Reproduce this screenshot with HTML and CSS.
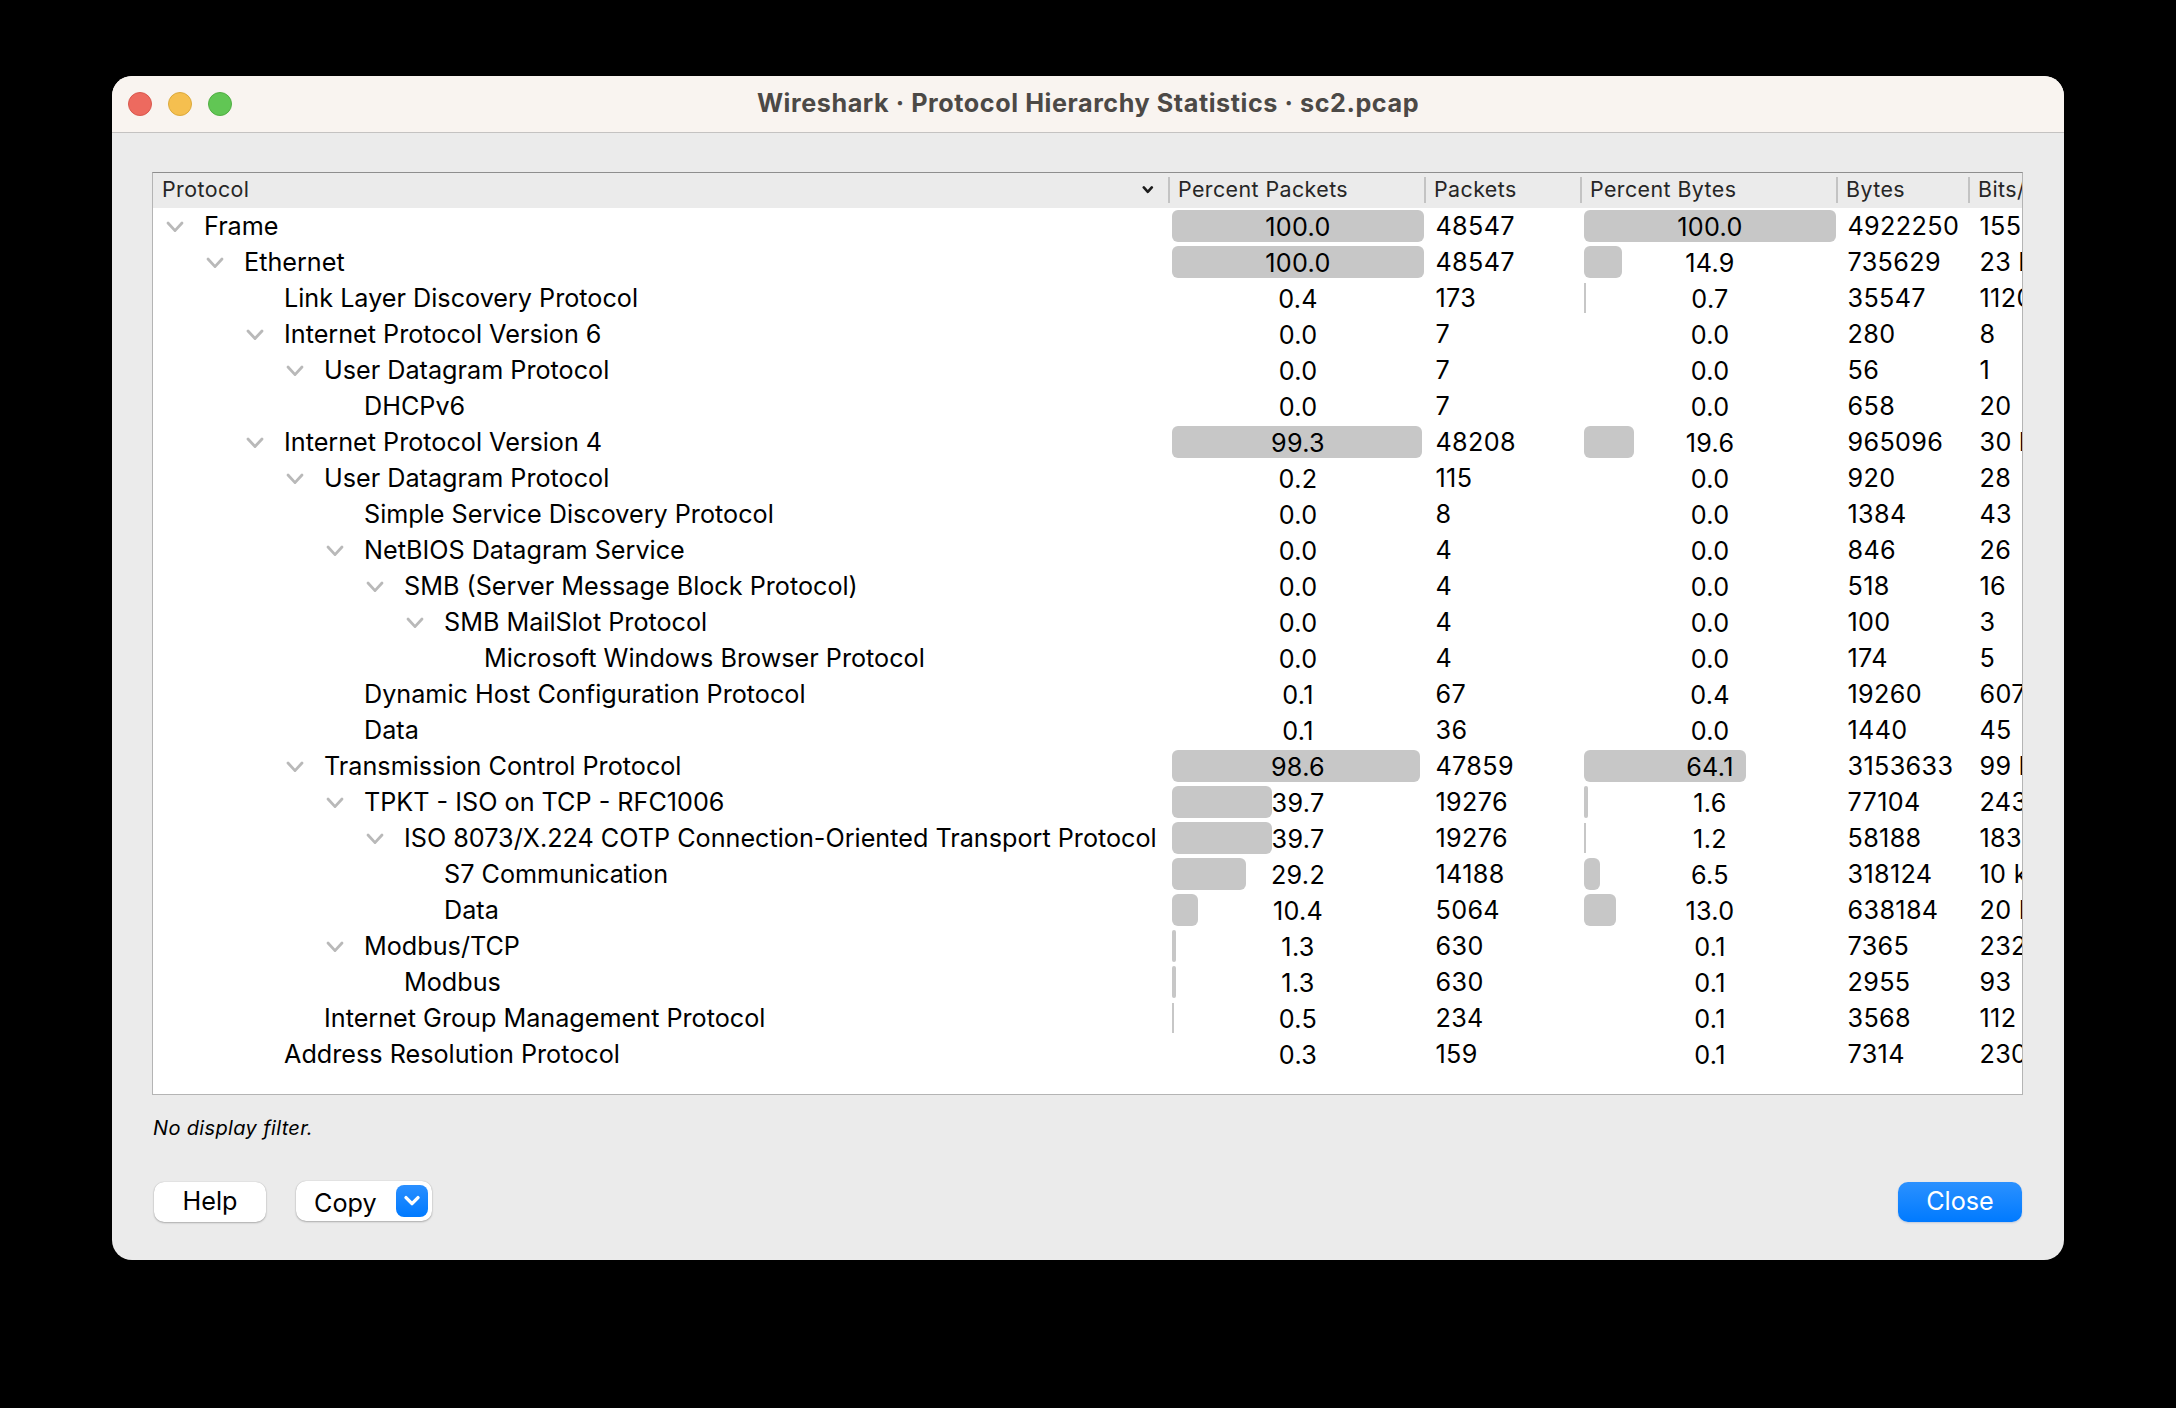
FILE: index.html
```html
<!DOCTYPE html>
<html lang="en">
<head>
<meta charset="utf-8">
<title>Wireshark · Protocol Hierarchy Statistics · sc2.pcap</title>
<link rel="stylesheet" href="styles.css">
</head>
<body>
<svg class="defs" aria-hidden="true"><symbol id="chev" viewBox="0 0 18 12"><path d="M2 2 L9 9.6 L16 2"/></symbol></svg>
<main class="window">
<header class="titlebar">
<div class="lights"><i class="light red"></i><i class="light yellow"></i><i class="light green"></i></div>
<h1 class="title">Wireshark · Protocol Hierarchy Statistics · sc2.pcap</h1>
</header>
<section class="content">
<div class="tree">
<div class="row head"><div class="th"><span>Protocol</span><svg class="sort" viewBox="0 0 12 10"><path d="M1.8 2.4 L5.8 6.8 L9.8 2.4"/></svg></div><div class="th"><span>Percent Packets</span></div><div class="th"><span>Packets</span></div><div class="th"><span>Percent Bytes</span></div><div class="th"><span>Bytes</span></div><div class="th"><span>Bits/s</span></div></div>
<div class="row"><div class="name l0"><svg class="chev"><use href="#chev"/></svg><span>Frame</span></div><div class="pct"><i class="bar" style="width:252px"></i><span>100.0</span></div><div class="num">48547</div><div class="pct"><i class="bar" style="width:252px"></i><span>100.0</span></div><div class="num">4922250</div><div class="num">155 k</div></div>
<div class="row"><div class="name l1"><svg class="chev"><use href="#chev"/></svg><span>Ethernet</span></div><div class="pct"><i class="bar" style="width:252px"></i><span>100.0</span></div><div class="num">48547</div><div class="pct"><i class="bar" style="width:38px"></i><span>14.9</span></div><div class="num">735629</div><div class="num">23 k</div></div>
<div class="row"><div class="name l2"><span>Link Layer Discovery Protocol</span></div><div class="pct"><span>0.4</span></div><div class="num">173</div><div class="pct"><i class="bar thin"></i><span>0.7</span></div><div class="num">35547</div><div class="num">1120</div></div>
<div class="row"><div class="name l2"><svg class="chev"><use href="#chev"/></svg><span>Internet Protocol Version 6</span></div><div class="pct"><span>0.0</span></div><div class="num">7</div><div class="pct"><span>0.0</span></div><div class="num">280</div><div class="num">8</div></div>
<div class="row"><div class="name l3"><svg class="chev"><use href="#chev"/></svg><span>User Datagram Protocol</span></div><div class="pct"><span>0.0</span></div><div class="num">7</div><div class="pct"><span>0.0</span></div><div class="num">56</div><div class="num">1</div></div>
<div class="row"><div class="name l4"><span>DHCPv6</span></div><div class="pct"><span>0.0</span></div><div class="num">7</div><div class="pct"><span>0.0</span></div><div class="num">658</div><div class="num">20</div></div>
<div class="row"><div class="name l2"><svg class="chev"><use href="#chev"/></svg><span>Internet Protocol Version 4</span></div><div class="pct"><i class="bar" style="width:250px"></i><span>99.3</span></div><div class="num">48208</div><div class="pct"><i class="bar" style="width:50px"></i><span>19.6</span></div><div class="num">965096</div><div class="num">30 k</div></div>
<div class="row"><div class="name l3"><svg class="chev"><use href="#chev"/></svg><span>User Datagram Protocol</span></div><div class="pct"><span>0.2</span></div><div class="num">115</div><div class="pct"><span>0.0</span></div><div class="num">920</div><div class="num">28</div></div>
<div class="row"><div class="name l4"><span>Simple Service Discovery Protocol</span></div><div class="pct"><span>0.0</span></div><div class="num">8</div><div class="pct"><span>0.0</span></div><div class="num">1384</div><div class="num">43</div></div>
<div class="row"><div class="name l4"><svg class="chev"><use href="#chev"/></svg><span>NetBIOS Datagram Service</span></div><div class="pct"><span>0.0</span></div><div class="num">4</div><div class="pct"><span>0.0</span></div><div class="num">846</div><div class="num">26</div></div>
<div class="row"><div class="name l5"><svg class="chev"><use href="#chev"/></svg><span>SMB (Server Message Block Protocol)</span></div><div class="pct"><span>0.0</span></div><div class="num">4</div><div class="pct"><span>0.0</span></div><div class="num">518</div><div class="num">16</div></div>
<div class="row"><div class="name l6"><svg class="chev"><use href="#chev"/></svg><span>SMB MailSlot Protocol</span></div><div class="pct"><span>0.0</span></div><div class="num">4</div><div class="pct"><span>0.0</span></div><div class="num">100</div><div class="num">3</div></div>
<div class="row"><div class="name l7"><span>Microsoft Windows Browser Protocol</span></div><div class="pct"><span>0.0</span></div><div class="num">4</div><div class="pct"><span>0.0</span></div><div class="num">174</div><div class="num">5</div></div>
<div class="row"><div class="name l4"><span>Dynamic Host Configuration Protocol</span></div><div class="pct"><span>0.1</span></div><div class="num">67</div><div class="pct"><span>0.4</span></div><div class="num">19260</div><div class="num">607</div></div>
<div class="row"><div class="name l4"><span>Data</span></div><div class="pct"><span>0.1</span></div><div class="num">36</div><div class="pct"><span>0.0</span></div><div class="num">1440</div><div class="num">45</div></div>
<div class="row"><div class="name l3"><svg class="chev"><use href="#chev"/></svg><span>Transmission Control Protocol</span></div><div class="pct"><i class="bar" style="width:248px"></i><span>98.6</span></div><div class="num">47859</div><div class="pct"><i class="bar" style="width:162px"></i><span>64.1</span></div><div class="num">3153633</div><div class="num">99 k</div></div>
<div class="row"><div class="name l4"><svg class="chev"><use href="#chev"/></svg><span>TPKT - ISO on TCP - RFC1006</span></div><div class="pct"><i class="bar" style="width:100px"></i><span>39.7</span></div><div class="num">19276</div><div class="pct"><i class="bar" style="width:4px"></i><span>1.6</span></div><div class="num">77104</div><div class="num">243</div></div>
<div class="row"><div class="name l5"><svg class="chev"><use href="#chev"/></svg><span>ISO 8073/X.224 COTP Connection-Oriented Transport Protocol</span></div><div class="pct"><i class="bar" style="width:100px"></i><span>39.7</span></div><div class="num">19276</div><div class="pct"><i class="bar thin"></i><span>1.2</span></div><div class="num">58188</div><div class="num">183</div></div>
<div class="row"><div class="name l6"><span>S7 Communication</span></div><div class="pct"><i class="bar" style="width:74px"></i><span>29.2</span></div><div class="num">14188</div><div class="pct"><i class="bar" style="width:16px"></i><span>6.5</span></div><div class="num">318124</div><div class="num">10 k</div></div>
<div class="row"><div class="name l6"><span>Data</span></div><div class="pct"><i class="bar" style="width:26px"></i><span>10.4</span></div><div class="num">5064</div><div class="pct"><i class="bar" style="width:32px"></i><span>13.0</span></div><div class="num">638184</div><div class="num">20 k</div></div>
<div class="row"><div class="name l4"><svg class="chev"><use href="#chev"/></svg><span>Modbus/TCP</span></div><div class="pct"><i class="bar" style="width:4px"></i><span>1.3</span></div><div class="num">630</div><div class="pct"><span>0.1</span></div><div class="num">7365</div><div class="num">232</div></div>
<div class="row"><div class="name l5"><span>Modbus</span></div><div class="pct"><i class="bar" style="width:4px"></i><span>1.3</span></div><div class="num">630</div><div class="pct"><span>0.1</span></div><div class="num">2955</div><div class="num">93</div></div>
<div class="row"><div class="name l3"><span>Internet Group Management Protocol</span></div><div class="pct"><i class="bar thin"></i><span>0.5</span></div><div class="num">234</div><div class="pct"><span>0.1</span></div><div class="num">3568</div><div class="num">112</div></div>
<div class="row"><div class="name l2"><span>Address Resolution Protocol</span></div><div class="pct"><span>0.3</span></div><div class="num">159</div><div class="pct"><span>0.1</span></div><div class="num">7314</div><div class="num">230</div></div>
</div>
<p class="hint"><span>No display filter.</span></p>
<footer class="buttons">
<button class="btn help"><span>Help</span></button>
<button class="btn copy"><span>Copy</span><i class="drop"><svg viewBox="0 0 18 12"><path d="M3 2.6 L9 8.6 L15 2.6"/></svg></i></button>
<button class="btn close"><span>Close</span></button>
</footer>
</section>
</main>
</body>
</html>
```
FILE: styles.css
```css
* { box-sizing: border-box; }
body {
  margin: 0;
  padding: 76px 112px 0;
  height: 1408px;
  background: #000;
  font-family: Inter, "Liberation Sans", sans-serif;
  color: #000;
  overflow: hidden;
}
.defs { position: absolute; width: 0; height: 0; }
.window {
  width: 1952px;
  height: 1184px;
  background: #ebebeb;
  border-radius: 20px;
  overflow: hidden;
}
.titlebar {
  height: 57px;
  display: grid;
  grid-template-columns: 200px 1fr 200px;
  align-items: center;
  background: #f9f4f0;
  border-bottom: 1px solid #c4c2c1;
}
.lights { display: flex; gap: 16px; padding-left: 16px; }
.light { width: 24px; height: 24px; border-radius: 50%; border: 1px solid; }
.red { background: #ed6a5f; border-color: #d9584e; }
.yellow { background: #f5bf4f; border-color: #dba93c; }
.green { background: #61c654; border-color: #51ae43; }
.title {
  margin: 0 0 2px;
  text-align: center;
  font-size: 25.2px;
  line-height: 30px;
  font-weight: 700;
  letter-spacing: 0.56px;
  color: #4c4946;
  white-space: nowrap;
}
.content { padding: 39px 41px 0 40px; }
.tree {
  height: 923px;
  background: #fff;
  border: 1px solid #b4b4b4;
  border-top-color: #8e8e8e;
  padding-left: 1px;
  overflow: hidden;
}
.row {
  display: grid;
  grid-template-columns: 1016px 256px 156px 256px 132px 52px;
  height: 36px;
  font-size: 25.2px;
  line-height: 36px;
  white-space: nowrap;
}
.head { height: 35px; margin-left: -1px; padding-left: 1px; background: #ebebeb; }
.th {
  display: flex;
  align-items: center;
  justify-content: space-between;
  padding: 0 10px 3px 8px;
  font-size: 21.4px;
  line-height: 30px;
  letter-spacing: 0.42px;
  color: #262626;
  overflow: hidden;
  background: linear-gradient(#c3c3c3, #c3c3c3) no-repeat right 4px / 2px 26px;
}
.th:last-child { background: none; padding-right: 0; }
.sort { width: 12px; height: 10px; margin: 2px 6px 0 0; fill: none; stroke: #1c1c1c; stroke-width: 2.6; stroke-linecap: round; stroke-linejoin: round; }
.name { display: flex; align-items: center; }
.chev { width: 18px; height: 12px; margin: 1px 20px 0 -38px; fill: none; stroke: #b9b9b9; stroke-width: 2.8; stroke-linecap: round; stroke-linejoin: round; }
.l0 { padding-left: 50px; }
.l1 { padding-left: 90px; }
.l2 { padding-left: 130px; }
.l3 { padding-left: 170px; }
.l4 { padding-left: 210px; }
.l5 { padding-left: 250px; }
.l6 { padding-left: 290px; }
.l7 { padding-left: 330px; }
.pct { display: grid; grid-template-rows: 32px; padding: 2px; letter-spacing: 0.3px; }
.pct > * { grid-area: 1 / 1; }
.pct span { text-align: center; line-height: 34px; }
.bar { height: 32px; border-radius: 6px; background: #c7c7c7; }
.bar.thin { width: 2px; height: 30px; margin-top: 1px; border-radius: 0; }
.num { padding-left: 9.5px; letter-spacing: 0.35px; overflow: hidden; }
.hint { margin: 20px 0 0 1px; font-size: 20px; line-height: 26px; font-style: italic; letter-spacing: 0.35px; }
.buttons { display: flex; align-items: flex-start; margin-top: 40px; padding: 0 1px 0 2px; }
.btn {
  height: 40px;
  margin: 1px 0 0;
  padding: 0 0 2px;
  border: 0;
  border-radius: 10px;
  background: #fff;
  box-shadow: 0 0 1px rgba(0,0,0,.25), 0 1px 2px rgba(0,0,0,.25);
  font: 25.2px/38px Inter, "Liberation Sans", sans-serif;
  color: #000;
}
.help { width: 112px; }
.copy { width: 136px; margin: 0 0 0 30px; padding: 0 4px 0 18px; display: flex; align-items: center; justify-content: space-between; }
.copy span { padding-top: 4px; }
.drop { display: grid; place-items: center; width: 32px; height: 32px; border-radius: 8px; background: linear-gradient(#2a8fff, #007aff); }
.drop svg { width: 18px; height: 12px; fill: none; stroke: #fff; stroke-width: 3.4; stroke-linecap: round; stroke-linejoin: round; }
.close { width: 124px; margin-left: auto; color: #fff; background: linear-gradient(#2b91ff, #007aff); box-shadow: 0 1px 2px rgba(0,60,160,.2); }
```
